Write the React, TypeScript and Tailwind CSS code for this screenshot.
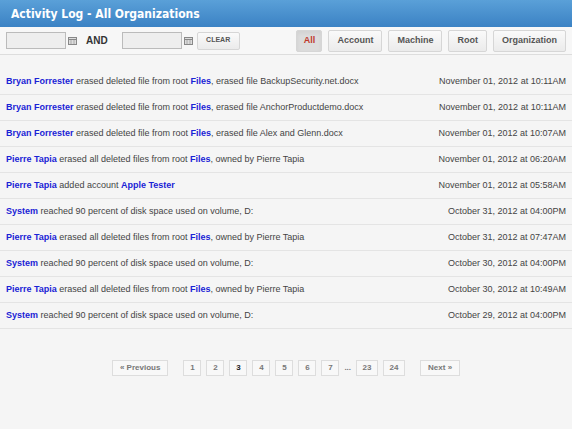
import React from "react";

const rows: [string, string, string?, string?, string][] = [
  ["Bryan Forrester", " erased deleted file from root ", "Files", ", erased file BackupSecurity.net.docx", "November 01, 2012 at 10:11AM"],
  ["Bryan Forrester", " erased deleted file from root ", "Files", ", erased file AnchorProductdemo.docx", "November 01, 2012 at 10:11AM"],
  ["Bryan Forrester", " erased deleted file from root ", "Files", ", erased file Alex and Glenn.docx", "November 01, 2012 at 10:07AM"],
  ["Pierre Tapia", " erased all deleted files from root ", "Files", ", owned by Pierre Tapia", "November 01, 2012 at 06:20AM"],
  ["Pierre Tapia", " added account ", "Apple Tester", "", "November 01, 2012 at 05:58AM"],
  ["System", " reached 90 percent of disk space used on volume, D:", "", "", "October 31, 2012 at 04:00PM"],
  ["Pierre Tapia", " erased all deleted files from root ", "Files", ", owned by Pierre Tapia", "October 31, 2012 at 07:47AM"],
  ["System", " reached 90 percent of disk space used on volume, D:", "", "", "October 30, 2012 at 04:00PM"],
  ["Pierre Tapia", " erased all deleted files from root ", "Files", ", owned by Pierre Tapia", "October 30, 2012 at 10:49AM"],
  ["System", " reached 90 percent of disk space used on volume, D:", "", "", "October 29, 2012 at 04:00PM"],
];

const Cal = () => (
  <svg width="9" height="8" viewBox="0 0 9 8" className="ml-[2px]">
    <rect x="0.5" y="0.5" width="8" height="7" fill="#ddd" stroke="#888" />
    <line x1="0.5" y1="2.5" x2="8.5" y2="2.5" stroke="#888" />
    <line x1="3" y1="3" x2="3" y2="7" stroke="#aaa" />
    <line x1="6" y1="3" x2="6" y2="7" stroke="#aaa" />
  </svg>
);

const btn = "h-[22px] px-[8px] border border-[#d6d6d6] rounded-[2px] bg-gradient-to-b from-[#fafafa] to-[#ebebeb] text-[9px] font-bold text-[#555] flex items-center justify-center";
const pg = "h-[16px] border border-[#ddd] bg-[#f8f8f8] flex items-center justify-center";

export default function App() {
  return (
    <div className="w-[572px] h-[429px] bg-[#f5f5f5] overflow-hidden" style={{ fontFamily: "'Liberation Sans', Arial, sans-serif" }}>
      <div className="h-[27px] bg-gradient-to-b from-[#5aa0d8] to-[#3b82c4] flex items-center px-[11px] text-white text-[12px] font-bold" style={{ fontFamily: "'DejaVu Sans Condensed', 'DejaVu Sans', sans-serif" }}>
        Activity Log - All Organizations
      </div>
      <div className="h-[28px] flex items-center px-[6px] border-b border-[#ddd] bg-[#f7f7f7]">
        <input className="w-[60px] h-[17px] border border-[#bbb] bg-[#eee]" />
        <Cal />
        <span className="ml-[9px] text-[10px] font-bold text-[#333]">AND</span>
        <input className="ml-[14px] w-[60px] h-[17px] border border-[#bbb] bg-[#eee]" />
        <Cal />
        <div className={btn + " ml-[4px] w-[43px] !text-[7px] !h-[18px]"}>CLEAR</div>
        <div className="ml-auto flex gap-[6px]">
          <div className={btn + " !text-[#c0392b] !bg-none bg-[#dcdcdc] border-[#bbb] shadow-inner w-[26px]"}>All</div>
          <div className={btn}>Account</div>
          <div className={btn}>Machine</div>
          <div className={btn}>Root</div>
          <div className={btn}>Organization</div>
        </div>
      </div>
      <div className="mt-[14px]">
        {rows.map((r, i) => (
          <div key={i} className="h-[26px] flex items-center justify-between pl-[6px] pr-[6px] border-b border-[#e4e4e4] text-[9px] text-[#444]">
            <span>
              <b className="text-[#1a23d6]">{r[0]}</b>
              {r[1]}
              {r[2] && <b className="text-[#1a23d6]">{r[2]}</b>}
              {r[3]}
            </span>
            <span>{r[4]}</span>
          </div>
        ))}
      </div>
      <div className="mt-[31px] flex items-center justify-center gap-[5px] text-[8px] font-bold text-[#777]">
        <div className={pg + " px-[7px] mr-[10px]"}>« Previous</div>
        {["1", "2", "3", "4", "5", "6", "7"].map((p) => (
          <div key={p} className={pg + " w-[18px] " + (p === "3" ? "text-[#222]" : "")}>{p}</div>
        ))}
        <span>...</span>
        <div className={pg + " w-[22px]"}>23</div>
        <div className={pg + " w-[22px]"}>24</div>
        <div className={pg + " px-[7px] ml-[10px]"}>Next »</div>
      </div>
    </div>
  );
}
